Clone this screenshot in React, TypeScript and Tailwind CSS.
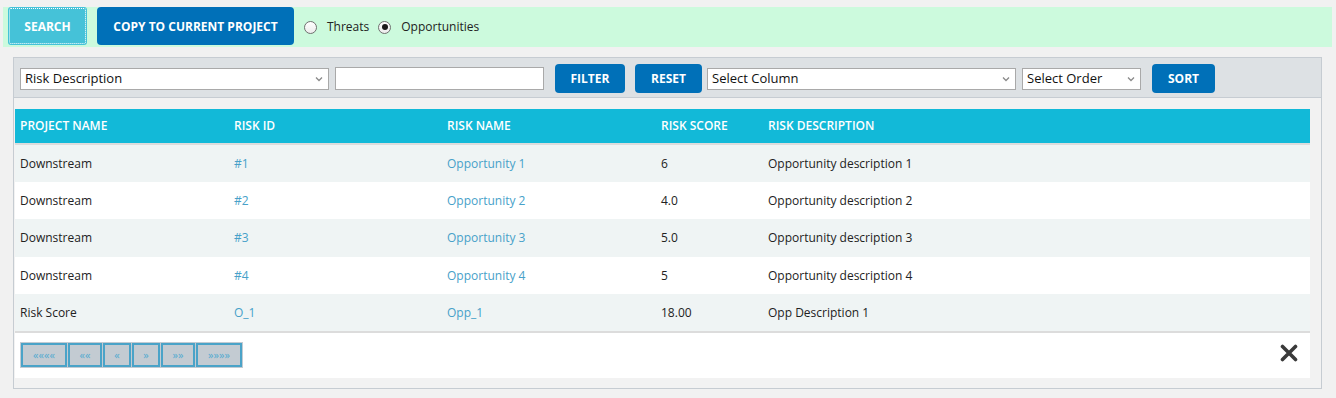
import React from "react";

const rows = [
  { p: "Downstream", id: "#1", name: "Opportunity 1", score: "6", desc: "Opportunity description 1", h: "h-[37px]", bg: "bg-[#eff4f4]" },
  { p: "Downstream", id: "#2", name: "Opportunity 2", score: "4.0", desc: "Opportunity description 2", h: "h-[37px]", bg: "bg-white" },
  { p: "Downstream", id: "#3", name: "Opportunity 3", score: "5.0", desc: "Opportunity description 3", h: "h-[38px]", bg: "bg-[#eff4f4]" },
  { p: "Downstream", id: "#4", name: "Opportunity 4", score: "5", desc: "Opportunity description 4", h: "h-[37px]", bg: "bg-white" },
  { p: "Risk Score", id: "O_1", name: "Opp_1", score: "18.00", desc: "Opp Description 1", h: "h-[37px]", bg: "bg-[#eff4f4]" },
];

function Chevron() {
  return (
    <svg width="8" height="6" viewBox="0 0 8 6" className="shrink-0">
      <path d="M1 1.5 L4 4.5 L7 1.5" fill="none" stroke="#8a8a8a" strokeWidth="1.3" />
    </svg>
  );
}

function Radio({ checked }: { checked?: boolean }) {
  return (
    <span className="w-[13px] h-[13px] rounded-full border border-[#6f6f6f] bg-gradient-to-b from-white to-[#ececec] flex items-center justify-center shrink-0">
      {checked && <span className="w-[6px] h-[6px] rounded-full bg-[#1a1a1a]" />}
    </span>
  );
}

export default function App() {
  const pag = [
    { t: "««««", w: "w-[46px]" },
    { t: "««", w: "w-[34px]" },
    { t: "«", w: "w-[28px]" },
    { t: "»", w: "w-[28px]" },
    { t: "»»", w: "w-[34px]" },
    { t: "»»»»", w: "w-[46px]" },
  ];
  return (
    <div className="min-h-[398px] bg-[#f1f1f1] pt-[7px] font-['Open_Sans',sans-serif] text-[12px] text-[#222]">
      {/* top bar */}
      <div className="ml-[3px] mr-[4px] h-[40px] bg-[#ccfadd] flex items-start pl-[5px]">
        <button className="w-[79px] h-[38px] pt-[1px] bg-[#45c2d8] rounded-[3px] text-white font-bold text-[12px] outline-1 outline-dotted outline-white outline-offset-[-2px]">
          SEARCH
        </button>
        <button className="ml-[10px] w-[197px] h-[38px] pt-[1px] bg-[#0070b8] rounded-[4px] text-white font-bold text-[12px]">
          COPY TO CURRENT PROJECT
        </button>
        <div className="h-[38px] flex items-center ml-[10px] pt-[2px]">
          <Radio />
          <span className="ml-[10px]">Threats</span>
          <span className="ml-[9px]"><Radio checked /></span>
          <span className="ml-[10px]">Opportunities</span>
        </div>
      </div>

      {/* panel */}
      <div className="mt-[10px] ml-[13px] w-[1309px] h-[332px] border border-[#c6ccd2] bg-[#f2f2f2]">
        <div className="h-[40px] bg-[#dde1e4] border-b border-[#c6ccd2] flex items-center pl-[6px] pt-[2px] text-[13px]">
          <div className="w-[309px] h-[22px] bg-white border border-[#a9a9a9] flex items-center justify-between pl-[4px] pr-[5px] text-[#111]">
            <span>Risk Description</span>
            <Chevron />
          </div>
          <div className="ml-[6px] w-[209px] h-[23px] bg-white border border-[#a9a9a9]" />
          <button className="ml-[11px] w-[70px] h-[29px] bg-[#0070b8] rounded-[4px] text-white font-bold text-[12px]">FILTER</button>
          <button className="ml-[10px] w-[67px] h-[29px] bg-[#0070b8] rounded-[4px] text-white font-bold text-[12px]">RESET</button>
          <div className="ml-[5px] w-[309px] h-[22px] bg-white border border-[#a9a9a9] flex items-center justify-between pl-[4px] pr-[5px] text-[#111]">
            <span>Select Column</span>
            <Chevron />
          </div>
          <div className="ml-[6px] w-[119px] h-[22px] bg-white border border-[#a9a9a9] flex items-center justify-between pl-[4px] pr-[5px] text-[#111]">
            <span>Select Order</span>
            <Chevron />
          </div>
          <button className="ml-[11px] w-[63px] h-[29px] bg-[#0070b8] rounded-[4px] text-white font-bold text-[12px]">SORT</button>
        </div>

        <div className="mt-[11px] ml-[1px] w-[1295px]">
          <div className="h-[36px] bg-[#12b9d8] border-b-2 border-[#dcdcdc] grid grid-cols-[214px_213px_214px_107px_1fr] items-center text-white font-semibold text-[12px]">
            <div className="pl-[5px]">PROJECT NAME</div>
            <div className="pl-[5px]">RISK ID</div>
            <div className="pl-[5px]">RISK NAME</div>
            <div className="pl-[5px]">RISK SCORE</div>
            <div className="pl-[5px]">RISK DESCRIPTION</div>
          </div>
          {rows.map((r, i) => (
            <div key={i} className={`${r.h} ${r.bg} grid grid-cols-[214px_213px_214px_107px_1fr] items-center text-[#222]`}>
              <div className="pl-[5px]">{r.p}</div>
              <div className="pl-[5px] text-[#47a1c9]">{r.id}</div>
              <div className="pl-[5px] text-[#47a1c9]">{r.name}</div>
              <div className="pl-[5px]">{r.score}</div>
              <div className="pl-[5px]">{r.desc}</div>
            </div>
          ))}
          <div className="h-[47px] bg-white border-t-2 border-[#dcdcdc] flex items-start justify-between pt-[9px] pl-[5px] pr-[12px]">
            <div className="flex gap-[1px] p-[1px] bg-[#c3cbd2]">
              {pag.map((b, i) => (
                <div key={i} className={`${b.w} h-[24px] border-2 border-[#4aa3c8] bg-[#c3cbd2] flex items-center justify-center text-[11px] text-[#52aad0]`}>
                  {b.t}
                </div>
              ))}
            </div>
            <svg width="18" height="18" viewBox="0 0 18 18" className="mt-[2px]">
              <path d="M2.5 2.5 L15.5 15.5 M15.5 2.5 L2.5 15.5" stroke="#3a3a3a" strokeWidth="3.6" strokeLinecap="round" />
            </svg>
          </div>
        </div>
      </div>
    </div>
  );
}
